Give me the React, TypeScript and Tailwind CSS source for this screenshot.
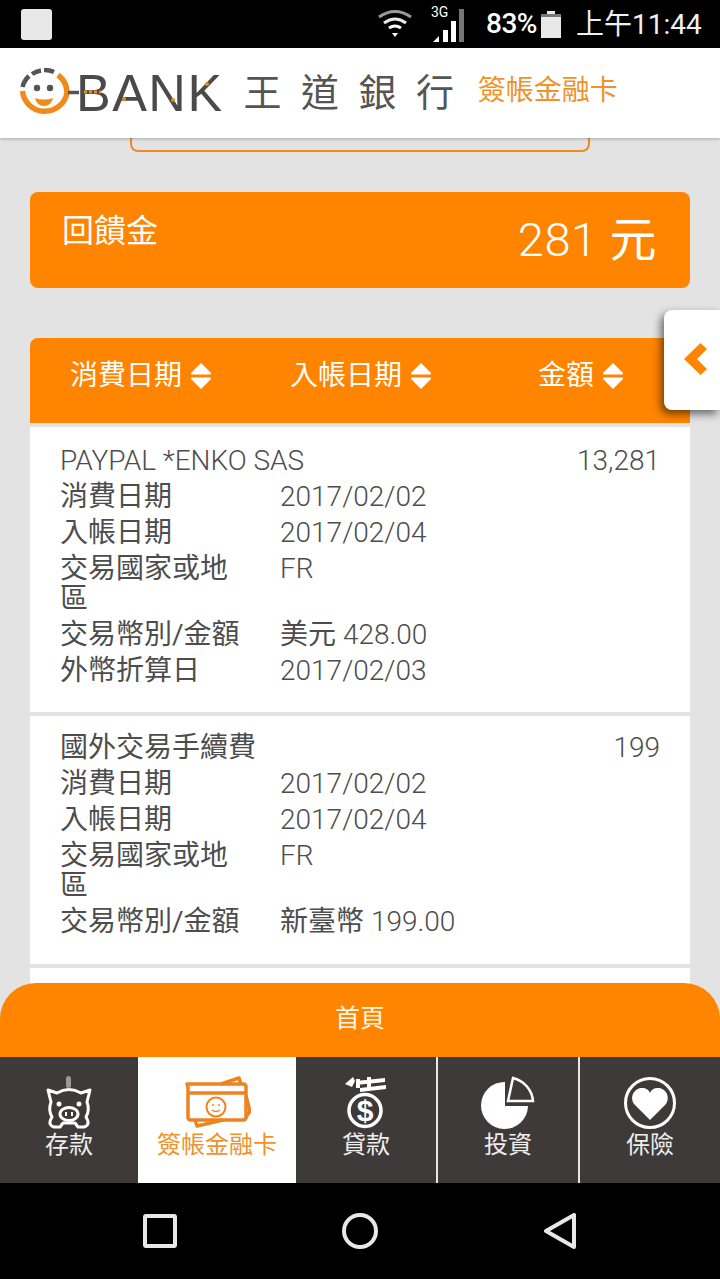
const ORANGE = 'bg-[#ff8400]';
const sans = "font-['Roboto','Noto_Sans_CJK_TC',sans-serif]";

const transactions = [
  {
    title: 'PAYPAL *ENKO SAS',
    titleClass: 'font-light',
    padding: 'pt-[16px] pb-[23px]',
    amount: '13,281',
    rows: [
      { label: '消費日期', value: '2017/02/02' },
      { label: '入帳日期', value: '2017/02/04' },
      { label: '交易國家或地區', value: 'FR' },
      { label: '交易幣別/金額', unit: '美元', value: '428.00' },
      { label: '外幣折算日', value: '2017/02/03' },
    ],
  },
  {
    title: '國外交易手續費',
    titleClass: '',
    padding: 'pt-[14px] pb-[24px]',
    amount: '199',
    rows: [
      { label: '消費日期', value: '2017/02/02' },
      { label: '入帳日期', value: '2017/02/04' },
      { label: '交易國家或地區', value: 'FR' },
      { label: '交易幣別/金額', unit: '新臺幣', value: '199.00' },
    ],
  },
];

const SortIcon = () => (
  <svg width="20" height="26" viewBox="0 0 20 26" className="ml-[9px] shrink-0">
    <path d="M10 0 L20 10 Q20.5 11.5 18.5 11.5 L1.5 11.5 Q-0.5 11.5 0 10 Z" fill="white" />
    <path d="M10 26 L20 16 Q20.5 14.5 18.5 14.5 L1.5 14.5 Q-0.5 14.5 0 16 Z" fill="white" />
  </svg>
);

const Logo = () => (
  <svg width="60" height="50" viewBox="0 0 60 50" className="shrink-0">
    <path d="M3.5 23 A22.5 22.5 0 0 0 48 25 A22.5 22.5 0 0 0 39 7" fill="none" stroke="#f08a1d" strokeWidth="5.5" />
    <path d="M3.5 19 A22.5 22.5 0 0 1 10 8 M13 6 A22.5 22.5 0 0 1 22 2.5 M25 2 A22.5 22.5 0 0 1 35 4" fill="none" stroke="#555" strokeWidth="4.5" />
    <circle cx="18" cy="20" r="3.2" fill="#555" />
    <circle cx="31" cy="20" r="3.2" fill="#555" />
    <path d="M16 30 Q25 33 34 30 Q32 38 25 38 Q18 38 16 30 Z" fill="#f08a1d" />
    <path d="M49 24.5 H60" stroke="#555" strokeWidth="3.5" />
  </svg>
);

const PigIcon = () => (
  <svg width="48" height="54" viewBox="0 0 48 54" fill="none" stroke="white" strokeWidth="3">
    <rect x="21" y="0" width="5" height="12" rx="2.5" fill="#999" stroke="none" />
    <path d="M3 14 L12 17 Q24 10 36 17 L45 14 L42 26 Q45 34 41 41 Q46 49 39 51 L33 51 L30 47 H18 L15 51 L9 51 Q2 49 7 41 Q3 34 6 26 Z" strokeLinejoin="round" />
    <circle cx="14" cy="28" r="2.5" fill="white" stroke="none" />
    <circle cx="34" cy="28" r="2.5" fill="white" stroke="none" />
    <ellipse cx="24" cy="38" rx="9" ry="6.5" />
    <path d="M21 36 V40 M27 36 V40" strokeWidth="2" />
  </svg>
);

const CardIcon = () => (
  <svg width="68" height="54" viewBox="0 0 68 54" fill="none" stroke="#ee8420" strokeWidth="3.5" strokeLinejoin="round">
    <path d="M4 8 H60 Q63 8 63 11 V41 Q63 44 60 44 H8 Q5 44 5 41 V11 Z" fill="white" />
    <path d="M38 8 L56 2 L58 8 M63 20 L67 35 L63 41 M12 44 L14 50 L40 44" />
    <path d="M5 17 H63" />
    <circle cx="33" cy="31" r="9.5" strokeWidth="2" />
    <circle cx="30" cy="29" r="1" fill="#ee8420" stroke="none" />
    <circle cx="36" cy="29" r="1" fill="#ee8420" stroke="none" />
    <path d="M29 34 Q33 37 37 34" strokeWidth="1.5" />
  </svg>
);

const MoneyIcon = () => (
  <svg width="44" height="54" viewBox="0 0 44 54" fill="none">
    <path d="M1 8 L9 1 L11 5 L8 11 Z" fill="white" />
    <path d="M12 3 H16 V12 H12 Z M23 1 H27 V12 H23 Z M12 5 L41 2 V6 L12 9 Z M16 12 L42 9 V13 L16 16 Z" fill="white" />
    <circle cx="21" cy="34.5" r="16" stroke="white" strokeWidth="3.5" />
    <text x="21" y="45" fontSize="30" fontWeight="700" fill="white" textAnchor="middle" fontFamily="Liberation Sans">$</text>
  </svg>
);

const PieIcon = () => (
  <svg width="54" height="54" viewBox="0 0 54 54">
    <path d="M24 6 V30 H47 A23.5 23.5 0 1 1 24 6 Z" fill="white" />
    <path d="M32 2 A26 26 0 0 1 52 25 H27 Z" fill="none" stroke="white" strokeWidth="2.5" />
  </svg>
);

const HeartIcon = () => (
  <svg width="54" height="54" viewBox="0 0 54 54">
    <circle cx="27" cy="27" r="24.5" fill="none" stroke="white" strokeWidth="3" />
    <path d="M27 44 L11 28 C6 20 12 12 19 12 C23 12 26 14 27 17 C28 14 31 12 35 12 C42 12 48 20 43 28 Z" fill="white" />
  </svg>
);

const navItems = [
  { label: '存款', icon: <PigIcon />, width: 'w-[138px]' },
  { label: '簽帳金融卡', icon: <CardIcon />, width: 'w-[158px]', active: true },
  { label: '貸款', icon: <MoneyIcon />, width: 'w-[142px] border-r-2 border-[#e6e6e6]' },
  { label: '投資', icon: <PieIcon />, width: 'w-[142px] border-r-2 border-[#e6e6e6]' },
  { label: '保險', icon: <HeartIcon />, width: 'w-[140px]' },
];

export default function App() {
  return (
    <div className={`flex h-[1279px] w-[720px] flex-col overflow-hidden bg-black ${sans}`}>
      {/* status bar */}
      <div className="flex h-12 shrink-0 items-center bg-black pl-[21px] pr-4 text-white">
        <div className="h-[31px] w-[31px] rounded-[3px] bg-[#e8e8e8]" />
        <svg width="36" height="30" viewBox="0 0 36 30" className="ml-[325px]" fill="none" stroke="#9a9a9a" strokeWidth="3">
          <path d="M2 8 Q18 -3 34 8" />
          <path d="M7 14 Q18 6 29 14" stroke="#e8e8e8" />
          <path d="M12 19 Q18 15 24 19" stroke="white" />
          <path d="M15 24 H21 L18 28 Z" fill="white" stroke="none" />
        </svg>
        <svg width="34" height="46" viewBox="0 0 34 46" className="ml-[18px]">
          <text x="0" y="16" fontSize="14" fill="white" fontFamily="Roboto">3G</text>
          <path d="M2 41 L8 35 V41 Z M12 41 V29 H17 V41 Z" fill="white" />
          <path d="M20 41 V20 H25 V41 Z" fill="white" />
          <path d="M28 41 V8 H33 V41 Z" fill="#777" />
        </svg>
        <span className="ml-[21px] text-[28px] font-medium leading-none tracking-[-0.5px]">83%</span>
        <svg width="20" height="27" viewBox="0 0 20 27" className="ml-[4px]">
          <path d="M6 0 H14 V3 H20 V27 H0 V3 H6 Z" fill="#e8e8e8" />
          <path d="M0 3 H20 V6 H0 Z" fill="#777" />
        </svg>
        <span className="ml-[15px] whitespace-nowrap pt-[2px] text-[28px] leading-none text-[#f0f0f0]">上午11:44</span>
      </div>

      {/* header */}
      <div className="z-20 flex h-[90px] shrink-0 items-center bg-white pl-[19px] shadow-[0_1px_3px_rgba(0,0,0,0.25)]">
        <Logo />
        <span className="relative ml-[-3px] font-['Liberation_Sans',sans-serif] text-[52px] leading-none tracking-[1.5px] text-[#4a4a4a]">
          BANK
          {/* orange dots in the wordmark */}
          <svg width="146" height="52" viewBox="0 0 146 52" className="absolute left-0 top-0">
            <path d="M8 25 H25" stroke="#f08a1d" strokeWidth="3" strokeDasharray="3 2" />
            <circle cx="48" cy="32" r="2" fill="#f08a1d" />
            <circle cx="97" cy="33" r="2" fill="#f08a1d" />
            <circle cx="131" cy="17" r="2" fill="#f08a1d" />
          </svg>
        </span>
        <span className="ml-[20px] text-[38px] leading-none tracking-[19.5px] text-[#555]">王道銀行</span>
        <span className="ml-[4px] pb-[5px] text-[28px] leading-none text-[#f0912a]">簽帳金融卡</span>
      </div>

      {/* content */}
      <div className="relative flex h-[1045px] shrink-0 flex-col overflow-hidden bg-[#e3e3e3]">
        <div className="mx-[130px] h-[14px] shrink-0 rounded-b-lg border-x-2 border-b-2 border-[#f08a1d]" />

        <div className={`mx-[30px] mt-10 flex h-24 shrink-0 justify-between rounded-lg ${ORANGE} pl-[32px] pr-[33px] text-white`}>
          <span className="mt-[23px] text-[32px] leading-none">回饋金</span>
          <span className="mt-[24px] text-[47px] font-light leading-none tracking-[0.5px]">
            281 <span className="font-normal">元</span>
          </span>
        </div>

        <div className={`mx-[30px] mt-[50px] flex h-[85px] shrink-0 items-center rounded-t-lg ${ORANGE} pb-[10px] text-[28px] text-white`}>
          <span className="ml-[40px] leading-none">消費日期</span>
          <SortIcon />
          <span className="ml-[79px] leading-none">入帳日期</span>
          <SortIcon />
          <span className="ml-[107px] leading-none">金額</span>
          <SortIcon />
        </div>

        <div className="mx-[30px] flex flex-col">
          {transactions.map((item) => (
            <div key={item.title} className={`mt-1 bg-white px-[30px] text-[28px] leading-[36px] text-[#4d4d4d] ${item.padding}`}>
              <div className="flex justify-between">
                <span className={item.titleClass}>{item.title}</span>
                <span className="font-light">{item.amount}</span>
              </div>
              {item.rows.map((row) => (
                <div key={row.label} className="flex">
                  <span className="w-[220px] shrink-0 py-[3px] pr-[30px] leading-[30px]">{row.label}</span>
                  <span>
                    {row.unit && <span>{row.unit} </span>}
                    <span className="font-light">{row.value}</span>
                  </span>
                </div>
              ))}
            </div>
          ))}
          <div className="mt-1 h-20 bg-white" />
        </div>

        {/* side tab */}
        <div className="absolute right-0 top-[172px] flex h-[100px] w-14 items-center rounded-l-lg bg-white pl-5 shadow-[-3px_4px_8px_rgba(0,0,0,0.55)]">
          <svg width="23" height="32" viewBox="0 0 23 32" className="mb-[2px]">
            <path d="M16.5 0 L23 6 L13 16 L23 26 L16.5 32 L0 16 Z" fill="#ff8400" />
          </svg>
        </div>

        {/* home tab */}
        <div className={`absolute bottom-[126px] left-0 right-0 flex h-[74px] items-center justify-center rounded-t-[36px] ${ORANGE} pb-[4px] text-[25px] leading-none text-[#fff5e6]`}>
          首頁
        </div>

        {/* bottom nav */}
        <div className="absolute bottom-0 left-0 right-0 flex h-[126px] bg-[#3e3a39]">
          {navItems.map((item) => (
            <div key={item.label} className={`flex shrink-0 flex-col items-center pt-[19px] ${item.width} ${item.active ? 'bg-white text-[#f0912a]' : 'text-[#eeeeee]'}`}>
              <div className="flex h-[54px] items-center justify-center">{item.icon}</div>
              <span className="whitespace-nowrap text-[24px] leading-[30px]">{item.label}</span>
            </div>
          ))}
        </div>
      </div>

      {/* android nav */}
      <div className="flex h-24 shrink-0 items-center bg-black pl-[143px]">
        <div className="h-[34px] w-[34px] rounded-[3px] border-[4px] border-[#e8e8e8]" />
        <div className="ml-[165px] h-9 w-9 rounded-full border-[4px] border-[#e8e8e8]" />
        <svg width="32" height="36" viewBox="0 0 32 36" className="ml-[166px]" fill="none" stroke="#e8e8e8" strokeWidth="4" strokeLinejoin="round">
          <path d="M30 2 V34 L2 18 Z" />
        </svg>
      </div>
    </div>
  );
}
